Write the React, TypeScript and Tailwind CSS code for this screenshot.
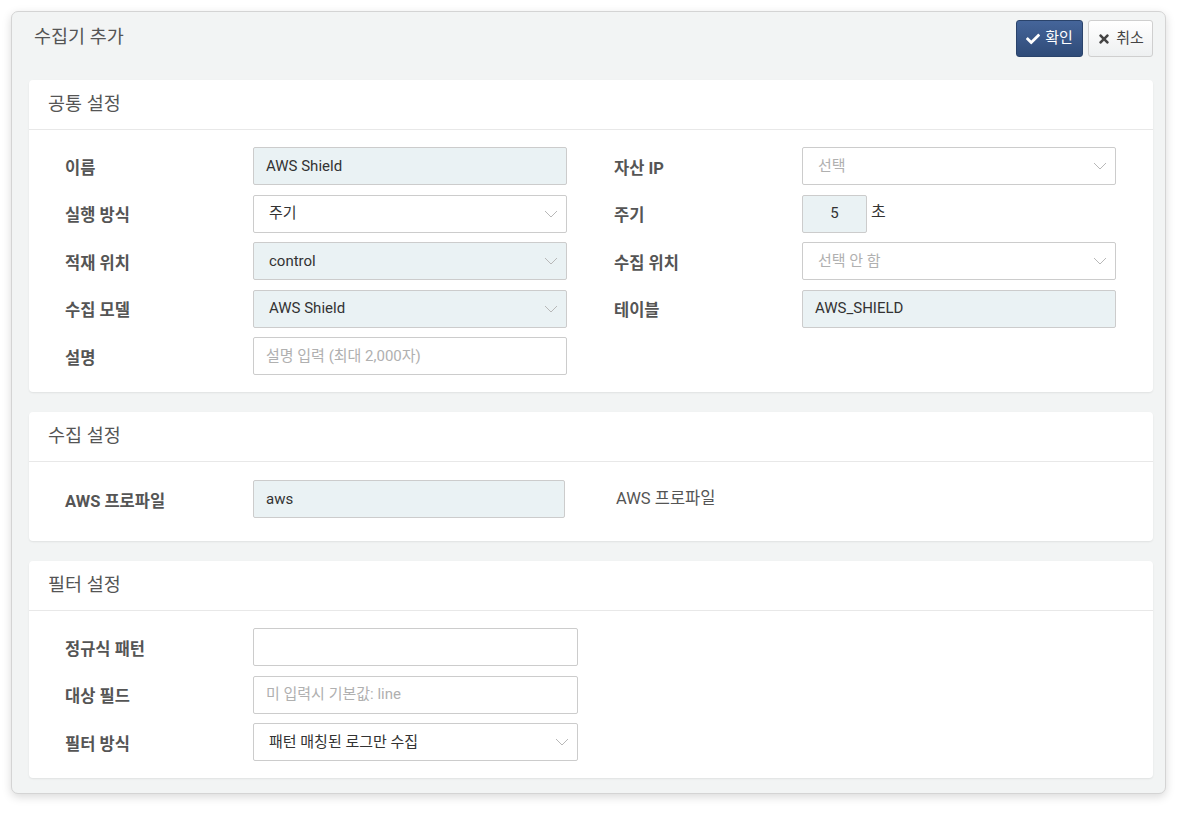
import { FaCheck, FaTimes } from "react-icons/fa";

const inputBase =
  "h-[38px] border border-[#cccccc] rounded-[2px] px-3 flex items-center text-[15px] text-[#333]";

function Chevron() {
  return (
    <svg width="14" height="8" viewBox="0 0 14 8" className="ml-auto">
      <path d="M1 1 L7 7 L13 1" fill="none" stroke="#b8b8b8" strokeWidth="1" />
    </svg>
  );
}

function Field({ value, filled, placeholder, select, className = "" }: { value?: string; filled?: boolean; placeholder?: string; select?: boolean; className?: string }) {
  return (
    <div className={`${inputBase} ${filled ? "bg-[#eaf2f4]" : "bg-white"} ${select ? "pl-[15px] pr-[8px]" : ""} ${className}`}>
      {value ? <span>{value}</span> : <span className="text-[#b0b0b0]">{placeholder}</span>}
      {select && <Chevron />}
    </div>
  );
}

function Label({ children, right }: { children: React.ReactNode; right?: boolean }) {
  return (
    <div className={`text-[16.5px] font-bold text-[#555] pt-[6px] ${right ? "pl-[47px]" : ""}`}>
      {children}
    </div>
  );
}

function Card({ title, children, bodyClass }: { title: string; children: React.ReactNode; bodyClass: string }) {
  return (
    <div className="bg-white rounded-[4px] shadow-[0_1px_2px_rgba(0,0,0,0.08)]">
      <div className="h-[50px] border-b border-[#e8e8e8] flex items-center px-[19px] text-[18.5px] text-[#555]">
        {title}
      </div>
      <div className={bodyClass}>{children}</div>
    </div>
  );
}

export default function App() {
  return (
    <div className="min-h-[816px] bg-white pt-[11px] pl-[11px] font-['Roboto','Noto_Sans_CJK_KR',sans-serif]">
      <div className="w-[1155px] h-[783px] bg-[#f2f4f4] border border-[#d4d4d4] rounded-[7px] shadow-[0_3px_10px_rgba(0,0,0,0.15)] pl-[17px] pr-[12px]">
        <div className="h-[68px] flex items-start justify-between">
          <div className="pt-[12px] pl-[5px] text-[18.5px] text-[#555]">수집기 추가</div>
          <div className="flex gap-[5px] pt-[8px]">
            <button className="h-[37px] w-[67px] flex items-center justify-center gap-[5px] rounded-[3px] border border-[#2a436b] bg-gradient-to-b from-[#45659a] to-[#2f4b78] text-white text-[15px]">
              <FaCheck className="text-[14px]" />
              확인
            </button>
            <button className="h-[37px] w-[65px] flex items-center justify-center gap-[5px] rounded-[3px] border border-[#cfcfcf] bg-gradient-to-b from-[#ffffff] to-[#eef0f1] text-[#444] text-[15px]">
              <FaTimes className="text-[14px] text-[#444]" />
              취소
            </button>
          </div>
        </div>

        <div className="flex flex-col gap-[20px]">
          <Card title="공통 설정" bodyClass="px-[36px] pt-[17px] pb-[17px]">
            <div className="grid grid-cols-[188px_314px_235px_314px] gap-y-[9.5px] items-center">
              <Label>이름</Label>
              <Field value="AWS Shield" filled />
              <Label right>자산 IP</Label>
              <Field placeholder="선택" select />
              <Label>실행 방식</Label>
              <Field value="주기" select />
              <Label right>주기</Label>
              <div className="flex items-center gap-[4px]">
                <div className={`${inputBase} bg-[#eaf2f4] w-[65px] justify-center`}>5</div>
                <span className="text-[16px] text-[#333] -mt-[4px]">초</span>
              </div>
              <Label>적재 위치</Label>
              <Field value="control" filled select />
              <Label right>수집 위치</Label>
              <Field placeholder="선택 안 함" select />
              <Label>수집 모델</Label>
              <Field value="AWS Shield" filled select />
              <Label right>테이블</Label>
              <Field value="AWS_SHIELD" filled />
              <Label>설명</Label>
              <Field placeholder="설명 입력 (최대 2,000자)" />
            </div>
          </Card>

          <Card title="수집 설정" bodyClass="px-[36px] pt-[18px] pb-[23px]">
            <div className="grid grid-cols-[188px_312px_auto] items-center">
              <Label>AWS 프로파일</Label>
              <Field value="aws" filled />
              <div className="pl-[51px] text-[16.5px] text-[#555]">AWS 프로파일</div>
            </div>
          </Card>

          <Card title="필터 설정" bodyClass="px-[36px] pt-[17px] pb-[17px]">
            <div className="grid grid-cols-[188px_325px] gap-y-[9.5px] items-center">
              <Label>정규식 패턴</Label>
              <Field value="" placeholder="" />
              <Label>대상 필드</Label>
              <Field placeholder="미 입력시 기본값: line" />
              <Label>필터 방식</Label>
              <Field value="패턴 매칭된 로그만 수집" select />
            </div>
          </Card>
        </div>
      </div>
    </div>
  );
}
